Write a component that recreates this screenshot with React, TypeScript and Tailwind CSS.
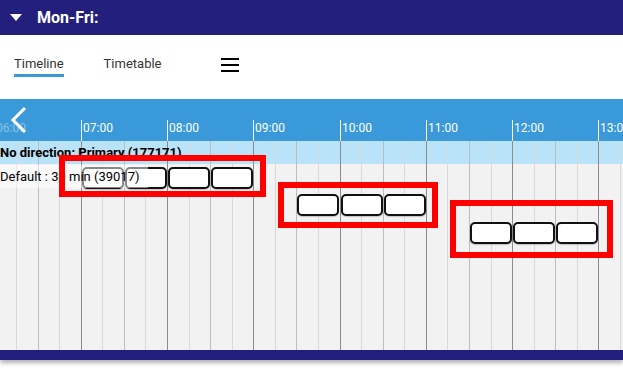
import React from "react";

const X0 = -5.6;
const STEP = 21.57;
const lx = (i: number) => X0 + i * STEP;

const lines = Array.from({ length: 31 }, (_, i) => i);
const hours = [
  { i: 0, t: "06:00" },
  { i: 4, t: "07:00" },
  { i: 8, t: "08:00" },
  { i: 12, t: "09:00" },
  { i: 16, t: "10:00" },
  { i: 20, t: "11:00" },
  { i: 24, t: "12:00" },
  { i: 28, t: "13:00" },
];

const trips: { i: number; top: number }[] = [
  { i: 4, top: 26 },
  { i: 6, top: 26 },
  { i: 8, top: 26 },
  { i: 10, top: 26 },
  { i: 14, top: 53 },
  { i: 16, top: 53 },
  { i: 18, top: 53 },
  { i: 22, top: 81 },
  { i: 24, top: 81 },
  { i: 26, top: 81 },
];

const reds = [
  { left: 59, top: 14, width: 207, height: 42 },
  { left: 278, top: 41, width: 160, height: 46 },
  { left: 450, top: 59, width: 163, height: 58 },
];

export default function App() {
  return (
    <div
      className="w-[623px] h-[384px] bg-white flex flex-col overflow-hidden"
      style={{ fontFamily: "Roboto, 'Liberation Sans', sans-serif" }}
    >
      {/* Top bar */}
      <div className="h-[35px] bg-[#231f7c] flex items-center pl-[10px] shrink-0">
        <div className="w-0 h-0 border-l-[6px] border-r-[6px] border-t-[7px] border-l-transparent border-r-transparent border-t-white" />
        <span className="ml-[15px] text-white text-[16px] font-bold leading-none">Mon-Fri:</span>
      </div>

      {/* Tabs */}
      <div className="h-[64px] shrink-0 flex items-start pt-[20px] pl-[14px]">
        <div className="flex flex-col">
          <span className="text-[13px] leading-[18px] text-[#333]">Timeline</span>
          <div className="mt-[1px] h-[3px] bg-[#3a9ad9]" />
        </div>
        <span className="ml-[40px] text-[13px] leading-[18px] text-[#333]">Timetable</span>
        <div className="ml-[59px] mt-[3px] flex flex-col gap-[4px] w-[18px]">
          <div className="h-[2px] bg-black" />
          <div className="h-[2px] bg-black" />
          <div className="h-[2px] bg-black" />
        </div>
      </div>

      {/* Time header */}
      <div className="relative h-[42px] shrink-0 bg-[#3a9ad9] overflow-hidden">
        {hours.map((h) => (
          <div key={h.t} className="absolute top-[21px] h-[21px]" style={{ left: Math.round(lx(h.i)) }}>
            <div className={h.i === 0 ? "absolute left-0 top-0 w-px h-full bg-white/40" : "absolute left-0 top-0 w-px h-full bg-white"} />
            <span
              className={
                h.i === 0
                  ? "absolute left-[2px] top-[1px] text-[12px] leading-[14px] text-white/40"
                  : "absolute left-[2px] top-[1px] text-[12px] leading-[14px] text-white"
              }
            >
              {h.t}
            </span>
          </div>
        ))}
        <svg className="absolute left-[10px] top-[8px]" width="18" height="26" viewBox="0 0 18 26">
          <polyline points="15,1 3,13 15,25" fill="none" stroke="white" strokeWidth="3" />
        </svg>
      </div>

      {/* Grid */}
      <div className="relative h-[209px] shrink-0 bg-[#f2f2f2] overflow-hidden">
        <div className="absolute left-0 right-0 top-0 h-[23px] bg-[#b9e3f8]" />
        {lines.map((i) => (
          <div
            key={i}
            className={
              i % 4 === 0
                ? "absolute top-0 bottom-0 w-px bg-[#8c8c8c]"
                : i % 2 === 0
                ? "absolute top-0 bottom-0 w-px bg-[#bdbdbd]"
                : "absolute top-0 bottom-0 w-px bg-[#d9d9d9]"
            }
            style={{ left: Math.round(lx(i)) }}
          />
        ))}
        <div className="absolute left-0 top-0 h-[23px] flex items-center text-[13px] font-bold text-black whitespace-nowrap">
          No direction: Primary (177171)
        </div>
        {trips.map((t, k) => (
          <div
            key={k}
            className="absolute h-[22px] bg-white border-2 border-[#111] rounded-[5px] shadow-[0_1px_1px_rgba(0,0,0,0.2)]"
            style={{ left: Math.round(lx(t.i) + 1), top: t.top, width: 42 }}
          />
        ))}
        <div className="absolute left-0 top-[24px] h-[23px] w-[148px] bg-white/50 flex items-center text-[13px] text-black whitespace-nowrap">
          Default : 30 min (39017)
        </div>
        {reds.map((r, k) => (
          <div
            key={k}
            className="absolute border-[6px] border-[#ff0000]"
            style={{ left: r.left, top: r.top, width: r.width, height: r.height }}
          />
        ))}
      </div>

      {/* Bottom bar */}
      <div className="h-[10px] shrink-0 bg-[#231f7c] shadow-[0_3px_4px_rgba(0,0,0,0.3)]" />
    </div>
  );
}
